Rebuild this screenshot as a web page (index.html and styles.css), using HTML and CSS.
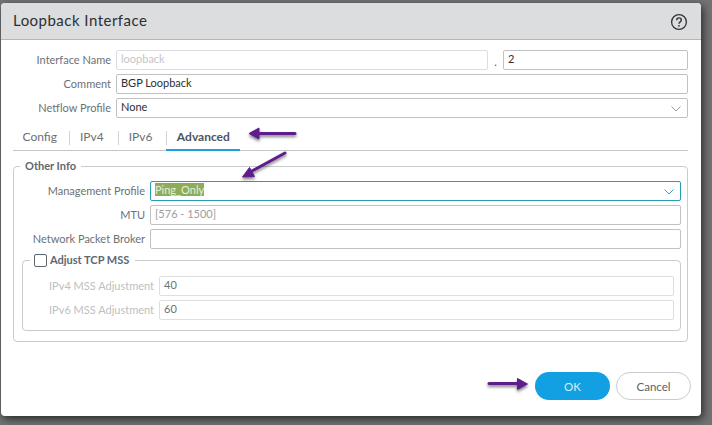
FILE: index.html
```
<!DOCTYPE html>
<html lang="en">
<head>
<meta charset="utf-8">
<title>Loopback Interface</title>
<link rel="stylesheet" href="styles.css">
</head>
<body>
<div class="dialog">
  <header class="head">
    <h1>Loopback Interface</h1>
    <svg class="help" width="18" height="18" viewBox="0 0 18 18"><circle cx="9" cy="9" r="7.4" fill="none" stroke="#333" stroke-width="1.3"/><path d="M6.7 7.2c0-1.500 1-2.300 2.300-2.300s2.300.9 2.300 2.100c0 1.800-2.300 1.900-2.300 3.700" fill="none" stroke="#333" stroke-width="1.4"/><circle cx="9" cy="12.800" r=".9" fill="#333"/></svg>
  </header>
  <div class="body">
    <div class="rows">
      <div class="row">
        <label class="lab">Interface Name</label>
        <div class="input off name">loopback</div>
        <span class="dot">.</span>
        <div class="input unit">2</div>
      </div>
      <div class="row">
        <label class="lab">Comment</label>
        <div class="input grow">BGP Loopback</div>
      </div>
      <div class="row">
        <label class="lab">Netflow Profile</label>
        <div class="input grow select">None
          <svg class="chev" width="10" height="6" viewBox="0 0 10 6"><path d="M.5.5l4.500 4.500 4.500-4.500" fill="none" stroke="#8a8f93" stroke-width=".9"/></svg>
        </div>
      </div>
    </div>
    <nav class="tabs">
      <span class="tab">Config</span>
      <span class="tab">IPv4</span>
      <span class="tab">IPv6</span>
      <span class="tab active">Advanced</span>
    </nav>
    <fieldset class="group outer">
      <legend>Other Info</legend>
      <div class="row r2">
        <label class="lab lab2">Management Profile</label>
        <div class="input grow select focus"><span class="sel">Ping_Only</span>
          <svg class="chev" width="10" height="6" viewBox="0 0 10 6"><path d="M.5.5l4.500 4.500 4.500-4.500" fill="none" stroke="#2a9bb5" stroke-width=".9"/></svg>
        </div>
      </div>
      <div class="row r2">
        <label class="lab lab2">MTU</label>
        <div class="input grow hint">[576 - 1500]</div>
      </div>
      <div class="row r2">
        <label class="lab lab2">Network Packet Broker</label>
        <div class="input grow"></div>
      </div>
      <fieldset class="group inner">
        <legend><span class="check"></span>Adjust TCP MSS</legend>
        <div class="row r3">
          <label class="lab lab3">IPv4 MSS Adjustment</label>
          <div class="input grow faint">40</div>
        </div>
        <div class="row r3">
          <label class="lab lab3">IPv6 MSS Adjustment</label>
          <div class="input grow faint">60</div>
        </div>
      </fieldset>
    </fieldset>
  </div>
  <footer class="foot">
    <button class="btn ok">OK</button>
    <button class="btn cancel">Cancel</button>
  </footer>
</div>
<svg class="arrows" width="712" height="425" viewBox="0 0 712 425">
  <defs><filter id="s" x="-30%" y="-60%" width="160%" height="240%"><feDropShadow dx="0" dy="2" stdDeviation="1.800" flood-color="#000" flood-opacity=".5"/></filter></defs>
  <g fill="#5e1f8c" stroke="#5e1f8c" filter="url(#s)">
    <path d="M295 133.500H260" stroke-width="3" stroke-linecap="round"/>
    <path d="M259 128l-10 5.500 10 5.500z"/>
    <path d="M285 153L252 171" stroke-width="3" stroke-linecap="round"/>
    <path d="M249.500 167.500l-7 9.500 12 -.5z"/>
    <path d="M489 383.500H518" stroke-width="3" stroke-linecap="round"/>
    <path d="M517.500 378.500l10 5.500-10 5.500z"/>
  </g>
</svg>
</body>
</html>
```
FILE: styles.css
```
* { box-sizing: border-box; }
html, body { margin: 0; height: 425px; overflow: hidden; }
body {
  background: #737373;
  font-family: Lato, "Open Sans", sans-serif;
  font-size: 11px;
  color: #333;
  padding: 3px 0 0 1px;
}
.dialog {
  width: 700px;
  height: 413px;
  background: #fff;
  border-radius: 4px;
  box-shadow: 2px 3px 8px rgba(0,0,0,.65);
  display: flex;
  flex-direction: column;
}
.head {
  height: 37px;
  flex: none;
  background: #dcddde;
  border-bottom: 1px solid #b4b6b8;
  border-radius: 4px 4px 0 0;
  display: flex;
  align-items: center;
  justify-content: space-between;
  padding: 0 13px 0 12px;
}
.head h1 { margin: 0 0 2px; font-size: 15px; font-weight: 400; letter-spacing: .48px; color: #2b2f33; }
.help { display: block; margin-top: 1px; }
.body { flex: 1; padding: 10px 13px 0 12px; }
.rows { display: flex; flex-direction: column; gap: 4px; }
.row { display: flex; align-items: center; height: 20px; }
.lab { width: 103px; flex: none; text-align: right; padding: 0 5px 2px 0; color: #6b7176; font-size: 11px; white-space: nowrap; }
.input {
  height: 20px;
  border: 1px solid #bfc1c3;
  border-radius: 2px;
  padding: 0 4px;
  line-height: 15px;
  font-size: 11px;
  color: #2b2f33;
  background: #fff;
  position: relative;
}
.grow { flex: 1; }
.name { width: 372px; color: #c4c6c8; border-color: #dcdddf; }
.unit { width: 185px; }
.dot { width: 15px; text-align: center; padding-top: 3px; color: #555; }
.chev { position: absolute; right: 6px; top: 7px; }
.tabs { display: flex; align-items: center; height: 33px; border-bottom: 1px solid #c3c5c7; }
.tab { position: relative; height: 32px; line-height: 37px; padding: 0 14px 0 11px; color: #6b7176; font-size: 12px; }
.tab:first-child { padding: 0 12px 0 9.500px; }
.tab + .tab::before { content: ""; position: absolute; left: 0; top: 13px; height: 14px; width: 1px; background: #d2d3d5; }
.tab.active { font-weight: 700; color: #4a5560; padding: 0 10.500px; }
.tab.active::after { content: ""; position: absolute; left: 0; right: 0; bottom: -1px; height: 2px; background: #1aa0dc; }
.group { border: 1px solid #c9cbcd; border-radius: 4px; margin: 0; padding: 0; min-width: 0; }
.group legend { font-weight: 700; font-size: 11px; color: #5d6870; line-height: 14px; padding: 0 5px; }
.outer { margin-top: 8px; height: 183px; padding: 8px 6px 0 8px; }
.outer legend { margin-left: -2px; }
.r2 { margin-bottom: 4px; }
.lab2 { width: 128px; }
.focus { border-color: #2a9bb5; }
.sel { background: #8dad5b; color: #e6efd6; }
.hint { color: #9a9da0; }
.inner { height: 78px; margin-top: 3px; padding: 9px 6px 0 6px; }
.inner legend { display: flex; align-items: center; margin-left: 1px; padding: 0 6px 0 4px; }
.check { width: 13px; height: 13px; border: 1.500px solid #5d6870; border-radius: 2px; margin-right: 3px; }
.r3 { margin-bottom: 4px; }
.lab3 { width: 130px; color: #bcbfc1; }
.faint { border-color: #dedfe1; color: #6b7176; }
.foot { height: 62px; flex: none; display: flex; justify-content: flex-end; gap: 6px; padding: 18px 10px 0 0; }
.btn { width: 75px; height: 28px; border-radius: 14px; font: 11.500px Lato, sans-serif; }
.ok { background: #12a0e2; border: 0; color: #d7eefa; }
.cancel { background: #fff; border: 1px solid #c9cbcd; color: #5a5f64; }
.arrows { position: absolute; left: 0; top: 0; pointer-events: none; }
```
